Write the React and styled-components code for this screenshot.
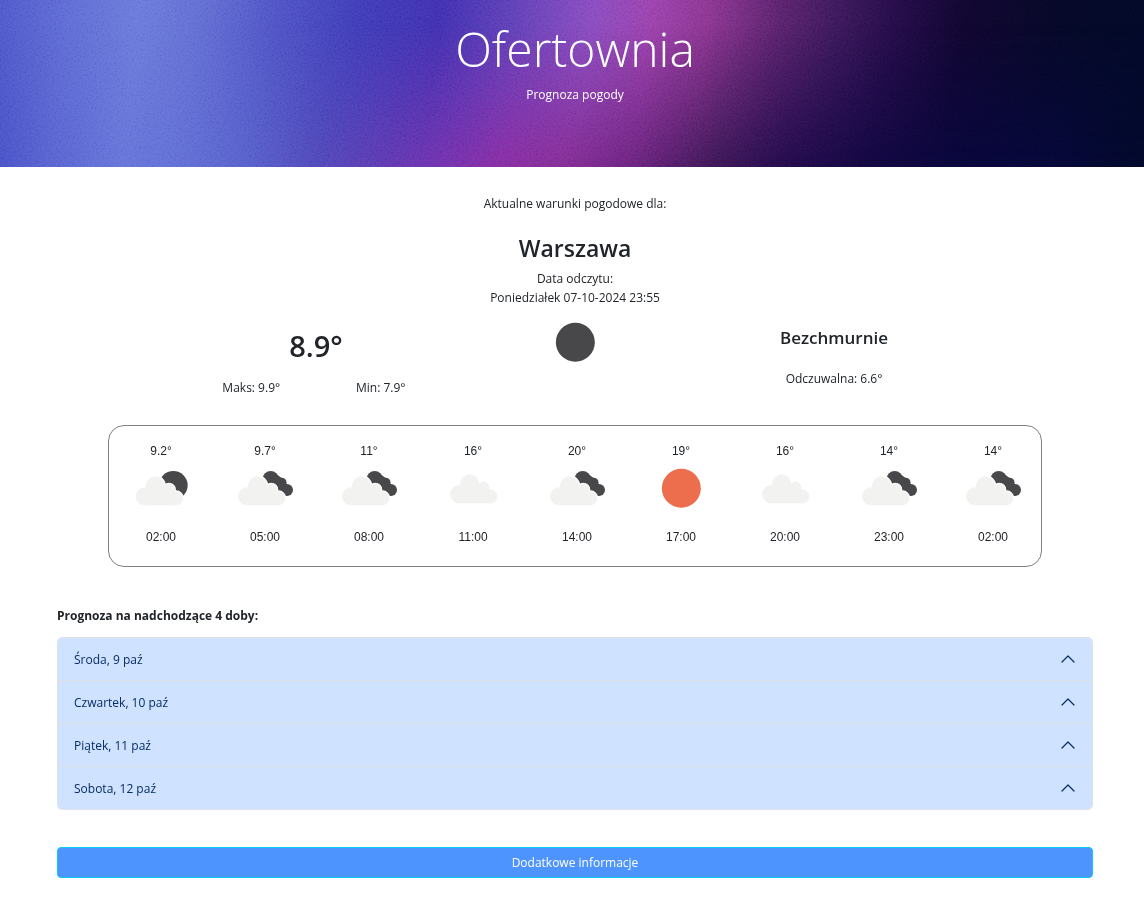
import React from "react";
import styled, { createGlobalStyle } from "styled-components";

const GlobalStyle = createGlobalStyle`
  *, *::before, *::after { box-sizing: border-box; }
  body {
    margin: 0;
    background: #fff;
    color: #212529;
    font-family: "Segoe UI", "Open Sans", "Noto Sans", sans-serif;
    font-size: 12px;
    line-height: 19px;
  }
  h1, h2, h3, p { margin: 0; }
`;

const Banner = styled.header`
  position: relative;
  height: 167px;
  padding: 16px 0 0 6px;
  text-align: center;
  color: #fff;
  background: linear-gradient(
    97deg,
    #5059cb 0%, #606dd5 6%, #6b7ada 12%, #6470d4 17%, #4f53c5 24%, #3f3cb9 31%, #4130b2 38%,
    #6040b8 44%, #8a4cc0 51%, #9c42ae 56%, #8d3592 61%, #5c226f 67%,
    #3c185b 72%, #240c49 77%, #10062f 83%, #060826 91%, #020926 100%
  );

  &::before {
    content: "";
    position: absolute;
    inset: 0;
    background: linear-gradient(
      97deg,
      #444bc4 0%, #5863d0 6%, #6674d9 12%, #626fd5 17%, #5760cb 23%, #5148ba 29%,
      #6038b2 35%, #7530ae 40%, #8a2ca4 45%, #862c96 50%, #6c2280 56%,
      #3c1656 63%, #220b4c 69%, #120740 76%, #08063a 84%, #060738 92%, #020828 100%
    );
    mask-image: linear-gradient(180deg, transparent 15%, #000 100%);
  }
`;

const Grain = styled.svg`
  position: absolute;
  inset: 0;
  width: 100%;
  height: 100%;
  opacity: 0.14;
  mix-blend-mode: soft-light;
`;

const BannerText = styled.div`
  position: relative;
`;

const Title = styled.h1`
  font-size: 48px;
  line-height: 66px;
  font-weight: 300;
`;

const Subtitle = styled.p`
  margin-top: 3px;
`;

const Main = styled.main`
  padding: 27px 51px 35px 57px;
`;

const Place = styled.section`
  text-align: center;
`;

const City = styled.h2`
  margin: 19px 0 5px;
  font-size: 23px;
  line-height: 32px;
  font-weight: 600;
`;

const Current = styled.section`
  display: grid;
  grid-template-columns: repeat(3, 1fr);
  width: 75%;
  margin: 11px auto 28px;
  text-align: center;
`;

const Temperature = styled.p`
  padding-top: 9px;
  font-size: 29px;
  line-height: 38px;
  font-weight: 600;
`;

const Range = styled.div`
  display: grid;
  grid-template-columns: 1fr 1fr;
  margin-top: 13px;
`;

const Condition = styled.h3`
  padding-top: 7px;
  margin-bottom: 18px;
  font-size: 17px;
  line-height: 26px;
  font-weight: 600;
`;

const WeatherIcon = styled.svg`
  display: block;
  width: 60px;
  height: 50px;
  margin: 0 auto;
`;

const Hours = styled.ul`
  display: flex;
  margin: 0 51px;
  padding: 16px 0 19px;
  list-style: none;
  border: 1px solid #808080;
  border-radius: 16px;
  overflow-x: auto;
  scrollbar-width: none;
  font-family: "Liberation Sans", Arial, sans-serif;
  color: #212529;
`;

const Hour = styled.li`
  flex: 0 0 104px;
  display: flex;
  flex-direction: column;
  gap: 3px;
  text-align: center;

  time { margin-top: 11px; }
`;

const ForecastTitle = styled.h3`
  margin: 39px 0 12px;
  font-size: 12px;
  line-height: 19px;
  font-weight: 700;
`;

const Accordion = styled.div`
  border: 1px solid #dee2e6;
  border-radius: 5px;
  overflow: hidden;
`;

const DayButton = styled.button`
  display: flex;
  align-items: center;
  justify-content: space-between;
  width: 100%;
  height: 42px;
  padding: 0 17px 0 16px;
  border: 0;
  background: #cfe2ff;
  color: #052c65;
  font: inherit;
  cursor: pointer;

  & + & {
    height: 43px;
    border-top: 1px solid #dee2e6;
  }
`;

const Chevron = styled.svg`
  width: 14px;
  height: 14px;
`;

const MoreButton = styled.button`
  display: block;
  width: 100%;
  height: 31px;
  margin-top: 37px;
  border: 1px solid #0dcaf0;
  border-radius: 4px;
  background: #4d94ff;
  color: #fff;
  font: inherit;
  cursor: pointer;
`;

const cloudShape = (
  <>
    <circle cx="27" cy="61" r="27" />
    <circle cx="59" cy="30" r="29" />
    <circle cx="100" cy="41" r="18" />
    <circle cx="121" cy="67" r="21" />
    <path d="M27 45 L40 25 H80 L110 45 L121 60 V88 H27 Z" />
  </>
);

function Cloud({ x, y }) {
  return (
    <g transform={`translate(${x} ${y})`}>
      <g fill="#fff" stroke="#fff" strokeWidth="6">{cloudShape}</g>
      <g fill="#f2f2f1">{cloudShape}</g>
    </g>
  );
}

const icons = {
  clearNight: <circle cx="91" cy="73" r="58.5" fill="#48484a" />,
  clearDay: <circle cx="91" cy="73" r="58.5" fill="#ec6e4c" />,
  fewNight: (
    <>
      <circle cx="127" cy="64" r="43" fill="#48484a" />
      <Cloud x={14} y={36} />
    </>
  ),
  cloudy: <Cloud x={21} y={30} />,
  broken: (
    <>
      <g fill="#48484a">
        <circle cx="107" cy="45" r="24" />
        <circle cx="140" cy="56" r="15" />
        <circle cx="156" cy="78" r="18" />
        <path d="M107 45 L127 32 L140 42 L154 60 L157 96 L112 90 Z" />
      </g>
      <Cloud x={9} y={36} />
    </>
  ),
};

function Weather({ kind, label }) {
  return (
    <WeatherIcon viewBox="0 0 180 150" role="img" aria-label={label}>
      {icons[kind]}
    </WeatherIcon>
  );
}

const labels = {
  clearNight: "Bezchmurnie",
  clearDay: "Słonecznie",
  fewNight: "Małe zachmurzenie",
  cloudy: "Pochmurno",
  broken: "Duże zachmurzenie",
};

const hours = [
  ["9.2°", "fewNight", "02:00"],
  ["9.7°", "broken", "05:00"],
  ["11°", "broken", "08:00"],
  ["16°", "cloudy", "11:00"],
  ["20°", "broken", "14:00"],
  ["19°", "clearDay", "17:00"],
  ["16°", "cloudy", "20:00"],
  ["14°", "broken", "23:00"],
  ["14°", "broken", "02:00"],
];

const days = ["Środa, 9 paź", "Czwartek, 10 paź", "Piątek, 11 paź", "Sobota, 12 paź"];

export default function App() {
  return (
    <>
      <GlobalStyle />
      <Banner>
        <Grain aria-hidden="true">
          <filter id="grain">
            <feTurbulence type="fractalNoise" baseFrequency="0.6" numOctaves="2" />
            <feColorMatrix type="matrix" values="2 0 0 0 -0.5  2 0 0 0 -0.5  2 0 0 0 -0.5  0 0 0 0 1" />
          </filter>
          <rect width="100%" height="100%" filter="url(#grain)" />
        </Grain>
        <BannerText>
          <Title>Ofertownia</Title>
          <Subtitle>Prognoza pogody</Subtitle>
        </BannerText>
      </Banner>
      <Main>
        <Place>
          <p>Aktualne warunki pogodowe dla:</p>
          <City>Warszawa</City>
          <p>Data odczytu:</p>
          <p>Poniedziałek 07-10-2024 23:55</p>
        </Place>
        <Current>
          <div>
            <Temperature>8.9°</Temperature>
            <Range>
              <span>Maks: 9.9°</span>
              <span>Min: 7.9°</span>
            </Range>
          </div>
          <Weather kind="clearNight" label={labels.clearNight} />
          <div>
            <Condition>Bezchmurnie</Condition>
            <p>Odczuwalna: 6.6°</p>
          </div>
        </Current>
        <Hours>
          {hours.map(([temp, kind, time], i) => (
            <Hour key={i}>
              <span>{temp}</span>
              <Weather kind={kind} label={labels[kind]} />
              <time>{time}</time>
            </Hour>
          ))}
        </Hours>
        <ForecastTitle>Prognoza na nadchodzące 4 doby:</ForecastTitle>
        <Accordion>
          {days.map((day) => (
            <DayButton key={day} type="button" aria-expanded="false">
              {day}
              <Chevron viewBox="0 0 14 14" fill="none" stroke="#052c65" aria-hidden="true">
                <path d="M1 10 L7 4 L13 10" strokeWidth="1.2" strokeLinecap="round" strokeLinejoin="round" />
              </Chevron>
            </DayButton>
          ))}
        </Accordion>
        <MoreButton type="button">Dodatkowe informacje</MoreButton>
      </Main>
    </>
  );
}
